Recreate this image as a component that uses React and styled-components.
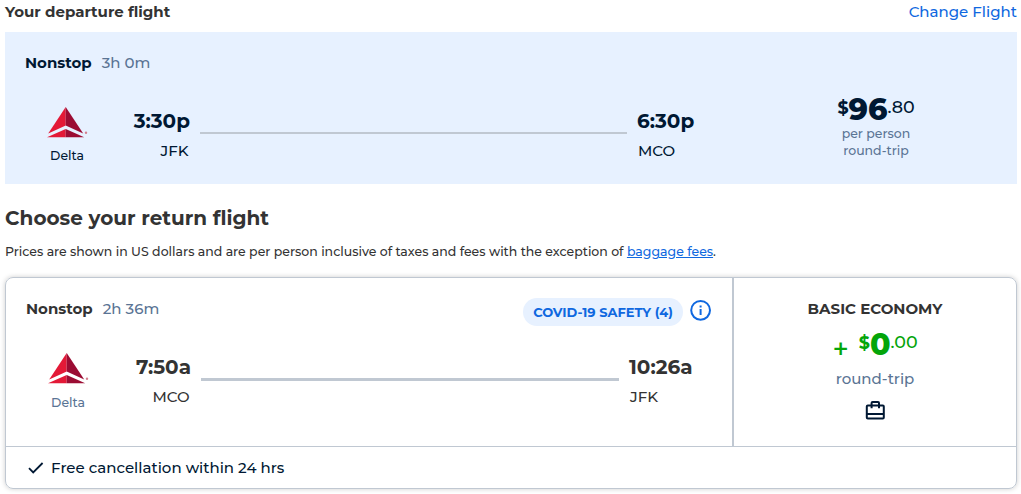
import React from 'react';
import styled, { createGlobalStyle } from 'styled-components';

const GlobalStyle = createGlobalStyle`
    * {
        box-sizing: border-box;
    }

    body {
        margin: 0;
        background: #fff;
        color: #333;
        font-family: Montserrat, Inter, 'Open Sans', sans-serif;
        font-size: 15px;
        font-weight: 500;
    }
`

function DeltaLogo() {
    return (
        <svg width="41" height="31" viewBox="0 0 41 31">
            <path d="M18.7 0 L1.2 26.5 L18.7 18.6 Z" fill="#e31937" />
            <path d="M18.7 0 L36.2 26.5 L18.7 18.6 Z" fill="#9b0c33" />
            <path d="M18.7 22 L0 30.2 H18.7 Z" fill="#e31937" />
            <path d="M18.7 22 L37.2 30.2 H18.7 Z" fill="#9b0c33" />
            <circle cx="39" cy="25.8" r="1.2" fill="#d3808f" />
        </svg>
    )
}

function Price({ dollars, cents, extra }) {
    return (
        <PriceRow $extra={extra}>
            {extra && <Plus>+</Plus>}
            <Currency>$</Currency>
            <Dollars>{dollars}</Dollars>
            <Cents>{cents}</Cents>
        </PriceRow>
    )
}

function Route({ depart, from, arrive, to, muted }) {
    return (
        <RouteRow>
            <Airline $muted={muted}>
                <DeltaLogo />
                <span>Delta</span>
            </Airline>
            <Stop $align="right">
                <Time>{depart}</Time>
                <Code>{from}</Code>
            </Stop>
            <Track $thick={muted} />
            <Stop $width={muted ? '83px' : '74px'}>
                <Time>{arrive}</Time>
                <Code>{to}</Code>
            </Stop>
        </RouteRow>
    )
}

function App() {
    return (
        <Page>
            <GlobalStyle />
            <Header>
                <HeaderTitle>Your departure flight</HeaderTitle>
                <ChangeLink href="#">Change Flight</ChangeLink>
            </Header>
            <Departure>
                <Itinerary>
                    <Summary>
                        <Nonstop>Nonstop</Nonstop>
                        <Duration>3h 0m</Duration>
                    </Summary>
                    <Route depart="3:30p" from="JFK" arrive="6:30p" to="MCO" />
                </Itinerary>
                <DepartureFare>
                    <Price dollars="96" cents=".80" />
                    <PerPerson>per person<br />round-trip</PerPerson>
                </DepartureFare>
            </Departure>
            <Title>Choose your return flight</Title>
            <Note>
                Prices are shown in US dollars and are per person inclusive of taxes and fees with the exception of <a href="#">baggage fees</a>.
            </Note>
            <Card>
                <CardBody>
                    <Itinerary>
                        <Summary>
                            <Nonstop>Nonstop</Nonstop>
                            <Duration>2h 36m</Duration>
                            <Safety>COVID-19 SAFETY (4)</Safety>
                            <InfoIcon width="22" height="22" viewBox="0 0 22 22" fill="none" stroke="#0f68e0" strokeWidth="2">
                                <circle cx="10.6" cy="11.3" r="9.4" />
                                <path d="M10.6 10V16M10.6 6.6V8.6" />
                            </InfoIcon>
                        </Summary>
                        <Route depart="7:50a" from="MCO" arrive="10:26a" to="JFK" muted />
                    </Itinerary>
                    <ReturnFare>
                        <FareName>BASIC ECONOMY</FareName>
                        <Price dollars="0" cents=".00" extra />
                        <RoundTrip>round-trip</RoundTrip>
                        <svg width="20" height="20" viewBox="0 0 20 20" fill="none" stroke="#001833" strokeWidth="2">
                            <rect x="1.8" y="5.4" width="17" height="13" rx="1" />
                            <path d="M6.6 8.2V3Q6.6 2 7.6 2H13Q14 2 14 3V8.2M1.8 14H18.8" />
                        </svg>
                    </ReturnFare>
                </CardBody>
                <CardFooter>
                    <svg width="16" height="12" viewBox="0 0 16 12" fill="none" stroke="#001833" strokeWidth="1.8">
                        <path d="M1 6.2L5.2 10.4L14.6 1" />
                    </svg>
                    <span>Free cancellation within 24 hrs</span>
                </CardFooter>
            </Card>
        </Page>
    )
}

const Page = styled.div`
    width: 1021px;
    height: 494px;
    padding: 0 4px 0 5px;
    overflow: hidden;
`

const Header = styled.div`
    display: flex;
    justify-content: space-between;
    height: 32px;
    line-height: 24px;
`

const HeaderTitle = styled.div`
    font-weight: 700;
`

const ChangeLink = styled.a`
    color: #0f68e0;
    text-decoration: none;
`

const Itinerary = styled.div`
    width: 726px;
    padding: 0 20px;
`

const Summary = styled.div`
    display: flex;
    align-items: center;
    height: 20px;
`

const Nonstop = styled.div`
    font-weight: 700;
`

const Duration = styled.div`
    margin-left: 10px;
    color: #5a7494;
`

const Safety = styled.div`
    width: 160px;
    height: 28px;
    margin: 8px 7px 0 auto;
    border-radius: 14px;
    background: #e7f1ff;
    color: #0f68e0;
    font-size: 13px;
    font-weight: 700;
    line-height: 28px;
    text-align: center;
`

const InfoIcon = styled.svg`
    margin-top: 4px;
`

const RouteRow = styled.div`
    display: flex;
    margin-top: 35px;
`

const Airline = styled.div`
    display: flex;
    flex-direction: column;
    align-items: center;
    width: 84px;
    font-size: 12.5px;
    line-height: 20px;
    color: ${({ $muted }) => ($muted ? '#5a7494' : 'inherit')};

    span {
        margin-top: ${({ $muted }) => ($muted ? '9px' : '8px')};
    }
`

const Stop = styled.div`
    width: ${({ $width }) => $width || '81px'};
    text-align: ${({ $align }) => $align || 'left'};
`

const Time = styled.div`
    font-size: 20px;
    font-weight: 700;
    line-height: 28px;
`

const Code = styled.div`
    margin-top: 6px;
    padding: 0 1.5px 0 1px;
    line-height: 20px;
`

const Track = styled.div`
    flex: 1;
    height: ${({ $thick }) => ($thick ? '3px' : '2px')};
    margin: 25px 10px 0;
    background: #c0c8d2;
`

const Departure = styled.div`
    display: flex;
    height: 152px;
    padding-top: 20px;
    background: #e7f1ff;
    color: #001833;
`

const DepartureFare = styled.div`
    flex: 1;
    padding: 44px 0 0 4px;
    text-align: center;
`

const PriceRow = styled.div`
    display: flex;
    justify-content: center;
    height: 28px;
    color: ${({ $extra }) => ($extra ? '#04a50a' : 'inherit')};
`

const Plus = styled.div`
    margin-right: 10px;
    font-size: 28px;
    line-height: 36px;
`

const Currency = styled.div`
    font-size: 17.5px;
    font-weight: 700;
    line-height: 24px;
`

const Dollars = styled.div`
    font-size: 30px;
    font-weight: 800;
    line-height: 28px;
`

const Cents = styled.div`
    font-size: 17.5px;
    line-height: 22px;
`

const PerPerson = styled.div`
    margin-top: 1px;
    color: #5a7494;
    font-size: 12.5px;
    line-height: 17px;
`

const Title = styled.h1`
    margin: 20px 0 0;
    font-size: 20px;
    font-weight: 700;
    line-height: 28px;
`

const Note = styled.p`
    margin: 10px 0 0;
    font-size: 12.5px;
    line-height: 20px;
    white-space: nowrap;

    a {
        color: #0f68e0;
    }
`

const Card = styled.div`
    height: 212px;
    margin-top: 15px;
    border: 1px solid #c0c8d2;
    border-radius: 8px;
    box-shadow: 0 0 5px rgba(0, 0, 0, 0.2);
`

const CardBody = styled.div`
    display: flex;
    height: 169px;
    border-bottom: 1px solid #c0c8d2;

    ${Itinerary} {
        padding-top: 20px;
    }
`

const ReturnFare = styled.div`
    display: flex;
    flex: 1;
    flex-direction: column;
    align-items: center;
    padding-top: 21px;
    border-left: 2px solid #c0c8d2;

    ${PriceRow} {
        margin-top: 12px;
    }
`

const FareName = styled.div`
    font-weight: 700;
    line-height: 20px;
`

const RoundTrip = styled.div`
    margin: 10px 0 11px;
    color: #5a7494;
    line-height: 20px;
`

const CardFooter = styled.div`
    display: flex;
    align-items: center;
    gap: 7px;
    height: 41px;
    padding-left: 22px;
    color: #001833;
`

export default App
